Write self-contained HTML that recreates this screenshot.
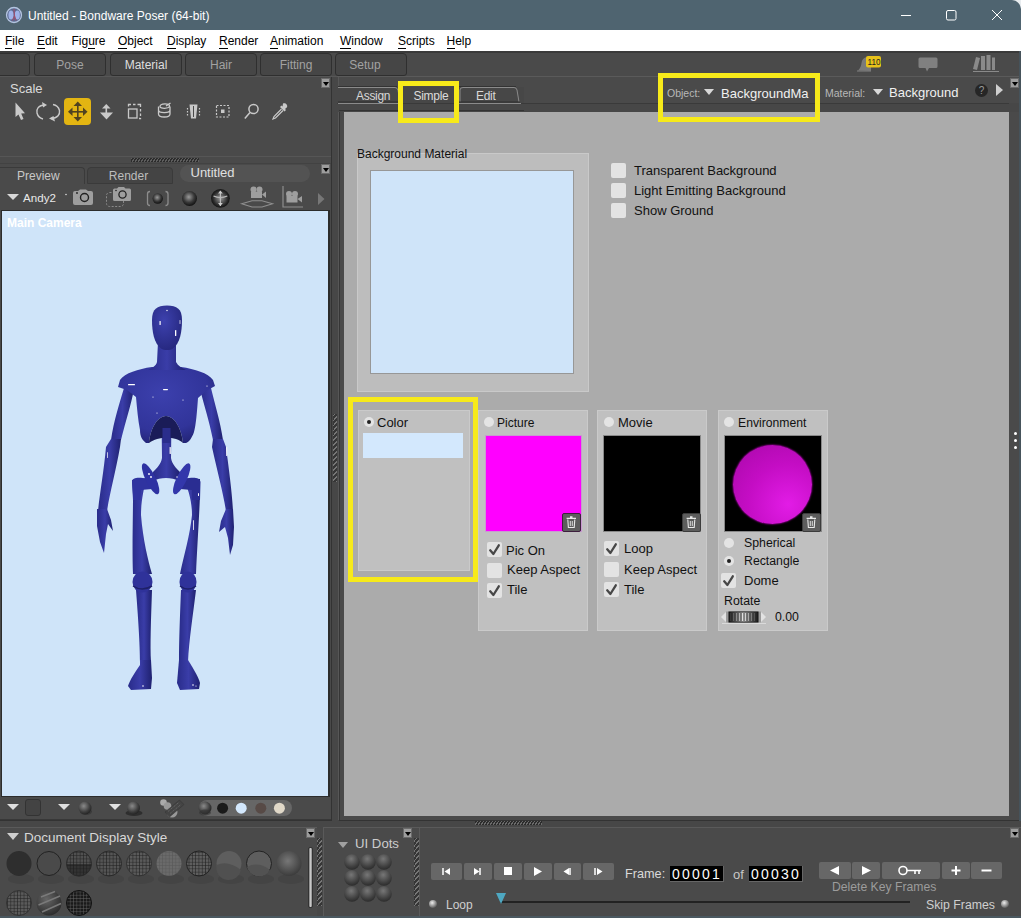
<!DOCTYPE html>
<html><head><meta charset="utf-8">
<style>
*{box-sizing:border-box;margin:0;padding:0}
html,body{width:1021px;height:918px;overflow:hidden;background:#4a4a4a;font-family:"Liberation Sans",sans-serif;position:relative}
.a{position:absolute}
#title{left:0;top:0;width:1021px;height:30px;background:#4f6470;color:#fff;font-size:12px}
#menu{left:0;top:30px;width:1021px;height:21px;background:#fff;color:#000;font-size:12px}
#menu span{position:absolute;top:3.5px}
#menu u{text-decoration:none;border-bottom:1px solid #000}
.rt{position:absolute;top:53px;height:23px;width:72px;border:1px solid #2f2f2f;border-radius:4px 4px 3px 3px;background:#464646;color:#a2a2a2;font-size:12px;text-align:center;line-height:23px}
.dd{position:absolute;width:9px;height:10px;background:#9d9d9d;border:1px solid #6a6a6a}
.dd:after{content:"";position:absolute;left:1px;top:3px;border-left:3px solid transparent;border-right:3px solid transparent;border-top:4px solid #000}
.lbl{position:absolute;color:#111;font-size:13px;white-space:nowrap}
.cb{position:absolute;width:15px;height:15px;background:#e3e3e3;border-radius:2px}
.yel{position:absolute;border:5px solid #f7ea1a}
.sp{position:absolute;background:#c0c0c0;border:1px solid #cacaca}
.rd{position:absolute;width:10px;height:10px;border-radius:50%;background:#e4e4e4}
.rd.on:after{content:"";position:absolute;left:3px;top:3px;width:4px;height:4px;border-radius:50%;background:#222}
.cb svg{position:absolute;left:0;top:0}
.trash{position:absolute;width:19px;height:19px;background:#5d5d5d;border:1px solid #3c3c3c;border-radius:2px}
.trash svg{position:absolute;left:-1px;top:-1px}
.hatch{position:absolute;background:repeating-linear-gradient(-50deg,#767676 0 1.2px,#363636 1.2px 3.2px)}
.btn{position:absolute;height:17px;background:#676767;border-radius:2px}
.btn svg{position:absolute;left:0;top:0}
.fb{position:absolute;width:54px;height:16px;background:#000;color:#fff;font-size:14px;font-family:"Liberation Sans",sans-serif;letter-spacing:2.2px;padding-left:2px;line-height:16px;border-right:1px solid #666;border-bottom:1px solid #666}
.dot{position:absolute;width:8px;height:8px;border-radius:50%;background:radial-gradient(circle at 40% 35%,#eee,#777 60%,#222);}
</style></head><body>
<div id="title" class="a">
  <svg class="a" style="left:2px;top:4px" width="24" height="22" viewBox="2 4 24 22">
   <circle cx="14" cy="15" r="7.5" fill="#5a6a90" stroke="#b4c4e0" stroke-width="1.3"/>
   <ellipse cx="11" cy="15" rx="2.6" ry="4.5" fill="#9fb2e8"/>
   <ellipse cx="17.3" cy="15" rx="2.6" ry="4.5" fill="#9fb2e8"/>
   <path d="M14 9 L14.5 16 L12.5 20.5 M14.5 16 L16 20.5" stroke="#9a5070" stroke-width="1.2" fill="none"/>
  </svg>
  <div class="a" style="left:28px;top:9px">Untitled - Bondware Poser (64-bit)</div>
  <svg class="a" style="left:880px;top:0" width="141" height="30" viewBox="880 0 141 30">
   <path d="M901 15.5 H911" stroke="#fff" stroke-width="1"/>
   <rect x="946.5" y="10.5" width="9.5" height="9.5" rx="1.5" fill="none" stroke="#fff" stroke-width="1"/>
   <path d="M992 10 L1002 20 M1002 10 L992 20" stroke="#fff" stroke-width="1"/>
   <path d="M1012 0 H1021 V9 Q1020 1 1012 0 Z" fill="#e8ecef"/>
  </svg>
</div>
<div id="menu" class="a">
  <span style="left:5px"><u>F</u>ile</span>
  <span style="left:37px"><u>E</u>dit</span>
  <span style="left:71.5px">Fig<u>u</u>re</span>
  <span style="left:118px"><u>O</u>bject</span>
  <span style="left:167px"><u>D</u>isplay</span>
  <span style="left:219px"><u>R</u>ender</span>
  <span style="left:270px"><u>A</u>nimation</span>
  <span style="left:340px"><u>W</u>indow</span>
  <span style="left:398px"><u>S</u>cripts</span>
  <span style="left:446.5px"><u>H</u>elp</span>
</div>

<!-- room tabs -->
<div class="a" style="left:0;top:51px;width:1021px;height:26px;background:#4a4a4a;border-top:2px solid #3a3a3a"></div><div class="a" style="left:0;top:76px;width:1021px;height:1px;background:#565656"></div>
<div class="rt" style="left:-42px"></div>
<div class="rt" style="left:34px">Pose</div>
<div class="rt" style="left:110px;color:#dedede">Material</div>
<div class="rt" style="left:185px">Hair</div>
<div class="rt" style="left:260px">Fitting</div>
<div class="rt" style="left:335px;text-indent:-12px">Setup</div>

<!-- left tool panel -->
<div class="a" style="left:0;top:77px;width:331px;height:84px;background:#4a4a4a"></div>
<div class="a" style="left:10px;top:81px;color:#dadada;font-size:13px">Scale</div>
<div class="dd" style="left:321px;top:78px"></div>
<svg class="a" style="left:0;top:95px" width="331" height="35" viewBox="0 95 331 35">
 <g fill="#c9c9c9" stroke="none">
  <path d="M15.5 102.5 L15.5 117 L18.5 114.5 L21 120 L23.5 119 L21.2 113.6 L25 113.3 Z"/>
 </g>
 <g fill="none" stroke="#c9c9c9" stroke-width="1.4">
  <path d="M45 105 C38 105 36 110 37 113 C38 117 41 118.5 43 119"/>
  <path d="M51 118.5 C58 118.5 60 114 59.5 110.5 C58.5 106.5 55.5 105 53 104.5"/>
 </g>
 <g fill="#c9c9c9"><path d="M42 102 L47 105 L43 107.5 Z"/><path d="M55 121.5 L49 118.5 L53.5 116 Z"/></g>
 <rect x="64" y="98" width="27" height="27" rx="4" fill="#e3b512"/>
 <g fill="#4f4220">
  <rect x="77" y="104" width="1.6" height="16"/><rect x="70" y="111" width="16" height="1.6"/>
  <path d="M77.8 101.5 L73.5 106 L82 106 Z"/><path d="M77.8 121.5 L73.5 117 L82 117 Z"/>
  <path d="M68 111.8 L72.5 107.5 L72.5 116 Z"/><path d="M87.5 111.8 L83 107.5 L83 116 Z"/>
 </g>
 <g fill="#c9c9c9">
  <path d="M106.3 104 L102 108.5 L110.5 108.5 Z"/><rect x="105.5" y="107" width="1.6" height="6"/>
  <path d="M100 112.5 L113 112.5 L106.5 119.5 Z"/>
 </g>
 <g fill="none" stroke="#c9c9c9" stroke-width="1.3">
  <rect x="128.5" y="109" width="8.5" height="9"/>
  <path d="M128.5 106.5 V104.5 H131 M133 104.5 H135.5 M137.5 104.5 H140.5 V107 M140.5 109 V111.5 M140.5 113.5 V116 M140.5 118 V118.5 H139" stroke-width="1.3"/>
 </g>
 <g fill="none" stroke="#c9c9c9" stroke-width="1.3">
  <path d="M160 106.5 C160 103 170 103 169.5 106 C169 109 160 109 160 106.5 Z M158.5 110 C158.5 113.5 170 113.5 170 110 M158.5 114 C158.5 118 170 118 170 114 M158.5 106.5 V114 M170 106.5 V114"/>
  <path d="M166 106 L170.5 103" />
 </g>
 <g fill="#c9c9c9">
  <path d="M189.5 104.5 H197.5 L196 118.5 H191 Z"/>
 </g>
 <g fill="#4a4a4a"><rect x="193" y="106" width="1" height="11"/></g>
 <g fill="none" stroke="#c9c9c9" stroke-width="1.2" stroke-dasharray="1.5 1.5">
  <path d="M187.5 108 V117 M199.5 108 V117"/>
  <rect x="216.5" y="105.5" width="12.5" height="11.5" stroke-dasharray="2 1.5"/>
 </g>
 <rect x="221" y="109.5" width="3.5" height="3.5" fill="#c9c9c9"/>
 <g fill="none" stroke="#c9c9c9" stroke-width="1.5">
  <circle cx="253.5" cy="109" r="4.6"/>
  <path d="M250 112.5 L244.8 118.5"/>
 </g>
 <g fill="#c9c9c9">
  <path d="M283 103.5 C285.5 102.5 288 105 287 107.3 L285 109 L286 110 L284.5 111.5 L280 107 L281.5 105.5 L282.5 106.5 Z"/>
 </g>
 <g fill="none" stroke="#c9c9c9" stroke-width="1.2"><path d="M281.5 109 L274 116.5 L273 119 L275.5 118 L283 110.5"/></g>
</svg>


<!-- separator strip -->
<div class="a" style="left:331px;top:77px;width:1px;height:744px;background:#333"></div><div class="a" style="left:332px;top:77px;width:6px;height:744px;background:#474747"></div><div class="hatch" style="left:333px;top:414px;width:4px;height:68px"></div>

<!-- preview tabs -->
<div class="a" style="left:0;top:161px;width:331px;height:50px;background:#4a4a4a"></div>
<div class="a" style="left:0;top:156px;width:331px;height:1px;background:#565656"></div><div class="a" style="left:0;top:163px;width:331px;height:1px;background:#424242"></div><div class="a" style="left:131px;top:158px;width:68px;height:4px;background:repeating-linear-gradient(-60deg,#5e5e5e 0 1.2px,#2c2c2c 1.2px 2.6px)"></div>
<div class="a" style="left:0;top:167px;width:85px;height:17px;background:#4a4a4a;border:1px solid #3a3a3a;border-left:none;border-bottom:none;border-radius:0 4px 0 0;color:#c8c8c8;font-size:12px;padding-left:17px;line-height:17px">Preview</div>
<div class="a" style="left:87px;top:167px;width:86px;height:17px;background:#444;border:1px solid #3a3a3a;border-radius:4px 4px 0 0;color:#bdbdbd;font-size:12px;text-align:center;line-height:17px;text-indent:-3px">Render</div>
<div class="a" style="left:180px;top:165px;width:130px;height:17px;background:#535353;border-radius:9px;color:#e0e0e0;font-size:13px;padding-left:10.5px;line-height:16px">Untitled</div>
<div class="dd" style="left:321px;top:164px"></div>


<!-- camera row -->
<div class="a" style="left:7px;top:193.5px;border-left:6px solid transparent;border-right:6px solid transparent;border-top:6.5px solid #d8d8d8"></div>
<div class="a" style="left:23px;top:191px;color:#e8e8e8;font-size:11.6px">Andy2</div>
<svg class="a" style="left:0;top:183px" width="331" height="27" viewBox="0 183 331 27">
 <defs>
  <radialGradient id="sg1" cx="0.45" cy="0.4" r="0.6"><stop offset="0" stop-color="#9a9a9a"/><stop offset="0.6" stop-color="#3a3a3a"/><stop offset="1" stop-color="#111"/></radialGradient>
  <radialGradient id="sg2" cx="0.5" cy="0.5" r="0.55"><stop offset="0" stop-color="#9a9a9a"/><stop offset="0.7" stop-color="#2a2a2a"/><stop offset="1" stop-color="#0a0a0a"/></radialGradient>
 </defs>
 <circle cx="66" cy="194.5" r="0.8" fill="#ddd"/>
 <path d="M73 193 Q73 191 75 191 L78 191 L80 189.5 L86 189.5 L88 191 L91 191 Q93 191 93 193 L93 203 Q93 205 91 205 L75 205 Q73 205 73 203 Z" fill="#9e9e9e"/>
 <circle cx="84.5" cy="197.5" r="4" fill="none" stroke="#222" stroke-width="1.4"/>
 <circle cx="77" cy="193" r="0.9" fill="#222"/>
 <rect x="106.5" y="192.5" width="17" height="14" rx="3" fill="none" stroke="#8a8a8a" stroke-width="1" stroke-dasharray="2 1.5"/>
 <path d="M113 190 Q113 188.5 114.5 188.5 L117 188.5 L118.5 187 L124 187 L125.5 188.5 L129.5 188.5 Q131 188.5 131 190 L131 199.5 Q131 201 129.5 201 L114.5 201 Q113 201 113 199.5 Z" fill="#9e9e9e"/>
 <circle cx="122.5" cy="194.5" r="3.6" fill="none" stroke="#222" stroke-width="1.3"/>
 <circle cx="116" cy="190.5" r="0.8" fill="#222"/>
 <path d="M150 191.5 Q147.5 191.5 147.5 194 L147.5 203 Q147.5 205.5 150 205.5 M165.5 191.5 Q168 191.5 168 194 L168 203 Q168 205.5 165.5 205.5" fill="none" stroke="#8c8c8c" stroke-width="1.3"/>
 <circle cx="157.7" cy="198.5" r="5.2" fill="url(#sg1)"/>
 <circle cx="189.5" cy="198.5" r="7.5" fill="url(#sg1)"/>
 <circle cx="220.4" cy="198.3" r="9.4" fill="url(#sg2)"/>
 <path d="M220.4 191 L220.4 206 M213.5 196 Q220.4 199 227.3 196" fill="none" stroke="#bbb" stroke-width="1.2"/>
 <path d="M218 203 L220.4 206 L222.8 203 Z M218 193.5 L220.4 190.5 L222.8 193.5Z" fill="#ccc"/>
 <circle cx="253.5" cy="189.5" r="3" fill="#9e9e9e"/><circle cx="259.5" cy="189.5" r="3" fill="#9e9e9e"/>
 <rect x="251" y="191.5" width="11" height="6.5" fill="#9e9e9e"/><path d="M262 194.5 L266 191.5 L266 198 Z" fill="#9e9e9e"/>
 <path d="M241.8 203.8 L252 200.8 L262 200.8 L272.5 203.8 L262 207 L252 207 Z" fill="none" stroke="#8e8e8e" stroke-width="1.1"/>
 <path d="M283 186 L283 207 L303 207" fill="none" stroke="#8e8e8e" stroke-width="1.2"/>
 <circle cx="289" cy="194" r="3" fill="#9e9e9e"/><circle cx="295" cy="194" r="3" fill="#9e9e9e"/>
 <rect x="286.5" y="196" width="11" height="6.5" fill="#9e9e9e"/><path d="M297.5 199 L302 196 L302 202.5 Z" fill="#9e9e9e"/>
 <path d="M318 193 L324.5 199 L318 205 Z" fill="#777"/>
</svg>

<!-- preview viewport -->
<div class="a" style="left:1px;top:210px;width:329px;height:587px;background:#2c2c2c"></div>
<div class="a" style="left:2px;top:211px;width:326px;height:585px;background:#cfe4f9"></div>
<div class="a" style="left:7px;top:216px;color:#fff;font-size:12px;font-weight:bold">Main Camera</div>
<svg class="a" style="left:2px;top:211px" width="326" height="585" viewBox="2 211 326 585">
 <defs>
  <linearGradient id="lg" x1="0" y1="0" x2="1" y2="0"><stop offset="0" stop-color="#292c8a"/><stop offset="0.5" stop-color="#3a3da8"/><stop offset="1" stop-color="#1f2170"/></linearGradient>
  <radialGradient id="tg" cx="0.45" cy="0.35" r="0.7"><stop offset="0" stop-color="#3c40ad"/><stop offset="0.7" stop-color="#31349a"/><stop offset="1" stop-color="#222475"/></radialGradient>
  <radialGradient id="hg" cx="0.4" cy="0.35" r="0.7"><stop offset="0" stop-color="#3d41ae"/><stop offset="1" stop-color="#25277e"/></radialGradient>
 </defs>
 <g fill="url(#lg)">
  <!-- upper arms -->
  <path d="M124 388 L134 389 C131 405 126 420 121 440 L111 440 C114 420 119 405 124 388 Z"/>
  <path d="M200 389 L211 388 C215 405 220 420 223 440 L213 440 C209 420 204 405 200 389 Z"/>
  <!-- forearms -->
  <path d="M111 439 L121 439 L120 447 C116 470 110 492 107 511 L98 511 C100 492 104 470 106 447 Z"/>
  <path d="M213 439 L223 439 L226 447 C229 470 232 492 233 511 L226 511 C223 492 217 470 212 447 Z"/>
  <!-- hands -->
  <path d="M97 509 L107 509 L111 520 L113 531 L108 524 L106 534 L104 553 L100 542 L97 526 Z"/>
  <path d="M226 509 L233 509 L234 527 L233 545 L230 555 L228 538 L225 527 L219 532 L221 521 Z"/>
  <!-- thighs -->
  <path d="M132 480 L146 478 C144 490 141 500 141 515 C143 540 148 560 152 574 L133 574 C132 550 133 520 133 495 Z"/>
  <path d="M184 478 L200 479 L200 495 C199 520 197 550 196 574 L180 574 C184 555 190 535 192 515 C192 500 188 490 184 478 Z"/>
  <!-- shins -->
  <path d="M136 590 L152 590 C151 620 150 645 151 662 L140 662 C140 645 138 615 136 590 Z"/>
  <path d="M181 590 L196 590 C193 615 189 640 188 662 L179 662 C179 640 180 615 181 590 Z"/>
  <!-- feet -->
  <path d="M140 660 L151 660 L152 678 L151 689 L131 690 L128 686 C130 680 135 672 140 665 Z"/>
  <path d="M179 660 L188 660 C193 668 198 676 200 683 L199 689 L180 690 L177 683 Z"/>
 </g>
 <g fill="#2f329a">
  <ellipse cx="142.5" cy="582" rx="10" ry="10.5"/>
  <ellipse cx="188" cy="582" rx="8.5" ry="10.5"/>
 </g>
 <path d="M133 586 Q142 592 152 586 M180 586 Q188 592 196 586" stroke="#1e2068" stroke-width="1.5" fill="none"/>
 <!-- spine + pelvis -->
 <path d="M161.5 418 L171.5 418 L171 458 C172 464 176 468 180 472 L179 481 C172 477 160 477 153 481 L153 472 C157 468 161 464 162 458 Z" fill="url(#lg)"/>
 <path d="M132 482 C132 477 140 477 147 479 L154 481 L152 489 L141 490 L140 500 L133 500 Z" fill="#2f33a0"/>
 <path d="M200.5 482 C200 477 192 477 185 479 L178 481 L180 489 L192 490 L192 500 L200 500 Z" fill="#2a2d92"/>
 <ellipse cx="150.6" cy="478.8" rx="5" ry="17" transform="rotate(-26 150.6 478.8)" fill="#2e32a2"/>
 <ellipse cx="181.7" cy="478.8" rx="5" ry="17" transform="rotate(26 181.7 478.8)" fill="#3337ab"/>
 <!-- torso -->
 <path d="M152 367 L181 367 C195 369 208 373 213 380 L215 386 L206 391 L198 398 C197 412 196 425 194 432 C192 438 189 442 186 443 L183 443 C182 430 175 416 166 416 C157 416 150 430 149 443 L146 443 C142 440 140 436 140 430 C138 420 137 408 136 397 L127 390 L118 387 L120 380 C125 373 138 369 152 367 Z" fill="url(#tg)"/>
 <path d="M149 443 C150 430 157 416 166 416 C175 416 182 430 183 443 C176 436 158 436 149 443 Z" fill="#1a1c58"/>
 <path d="M162.5 428 L170.5 428 L170.5 443 L162.5 443 Z" fill="#2a2d8c"/>
 <!-- neck -->
 <path d="M158 342 L176 342 L176 362 C178 366 182 368 186 370 L148 370 C152 368 156 366 157 362 Z" fill="url(#lg)"/>
 <!-- head -->
 <path d="M167 305.5 C177 305.5 182 309 182 320 C182 332 180 343 173 348.5 C170 350.5 164 350.5 161 348.5 C154 343 152 332 152 320 C152 309 157 305.5 167 305.5 Z" fill="url(#hg)"/>
 <g fill="#fff">
  <circle cx="167" cy="310.5" r="0.7"/><rect x="159.5" y="321" width="1.2" height="4" rx="0.6"/><rect x="175" y="330" width="1.3" height="6" rx="0.6"/><rect x="179.5" y="320" width="1" height="4" rx="0.5" opacity="0.7"/>
  <rect x="128" y="384" width="7" height="1.3" rx="0.6"/><rect x="163" y="389" width="5" height="1.2" rx="0.6"/>
  <circle cx="153" cy="397" r="0.6"/><circle cx="157" cy="413" r="0.6"/>
  <circle cx="183" cy="400" r="0.6"/><circle cx="207" cy="386" r="0.6"/>
  <rect x="169.6" y="447" width="1.2" height="7" rx="0.6"/>
  <circle cx="149" cy="474" r="0.9"/><circle cx="151" cy="477" r="0.9"/><circle cx="177" cy="477" r="0.7"/>
  <rect x="198" y="493" width="1" height="3" rx="0.5"/><rect x="193" y="520" width="1" height="10" rx="0.5" opacity="0.8"/>
  <rect x="226" y="447" width="1.2" height="9" rx="0.6" opacity="0.8"/>
  <rect x="107" y="452" width="1" height="6" rx="0.5" opacity="0.7"/>
  <circle cx="143" cy="686" r="0.8"/><circle cx="193" cy="685" r="0.8"/><circle cx="196" cy="686" r="0.6"/>
 </g>
</svg>



<!-- preview bottom toolbar -->
<svg class="a" style="left:0;top:797px" width="331" height="25" viewBox="0 797 331 25">
 <defs>
  <radialGradient id="bs" cx="0.4" cy="0.35" r="0.65"><stop offset="0" stop-color="#8a8a8a"/><stop offset="0.7" stop-color="#3e3e3e"/><stop offset="1" stop-color="#252525"/></radialGradient>
 </defs>
 <path d="M7 804 L19 804 L13 810 Z" fill="#e0e0e0"/>
 <rect x="25.5" y="799.5" width="15" height="16" rx="2.5" fill="#434343" stroke="#333" stroke-width="1"/>
 <path d="M58 804 L70 804 L64 810 Z" fill="#e0e0e0"/>
 <ellipse cx="86" cy="811.5" rx="6" ry="3.5" fill="#3a3a3a"/>
 <circle cx="85" cy="808" r="6.5" fill="url(#bs)"/>
 <path d="M109 804 L121 804 L115 810 Z" fill="#e0e0e0"/>
 <ellipse cx="134" cy="813" rx="8.5" ry="3" fill="#2e2e2e"/>
 <circle cx="133.5" cy="808" r="6.5" fill="url(#bs)"/>
 <circle cx="163.5" cy="802.5" r="3.3" fill="#aaa"/><circle cx="167.5" cy="806" r="3.8" fill="#999"/>
 <circle cx="172" cy="812" r="5.5" fill="#999"/>
 <path d="M165 812 L179.5 800 L184 804.5 L169.5 817 Z" fill="#444" stroke="#333" stroke-width="0.5"/>
 <path d="M168 811.5 L179 802.3 M170 813.5 L181 804.5" stroke="#888" stroke-width="0.6" stroke-dasharray="1 1"/>
 <rect x="199" y="800" width="93" height="16" rx="8" fill="#666"/>
 <circle cx="205" cy="808" r="6.5" fill="url(#bs)"/>
 <ellipse cx="205" cy="812.5" rx="6" ry="3" fill="#333" opacity="0.6"/>
 <circle cx="222.6" cy="808.2" r="5.5" fill="#1a1a1a"/>
 <circle cx="241.2" cy="808.2" r="5.5" fill="#d3e8fd"/>
 <circle cx="260.8" cy="808.2" r="5.5" fill="#574a46"/>
 <circle cx="279.4" cy="808.2" r="5.5" fill="#e0d8c8"/>
</svg>
<div class="a" style="left:0;top:819px;width:331px;height:1px;background:#383838"></div>

<!-- main material panel -->
<div class="a" style="left:338px;top:77px;width:683px;height:744px;background:#4a4a4a;border-left:1px solid #575757;border-bottom:1px solid #333"></div><div class="a" style="left:339px;top:104px;width:1px;height:716px;background:#363636"></div>
<div class="dd" style="left:1010px;top:78px"></div>

<!-- material room header -->
<div class="a" style="left:337px;top:76px;width:684px;height:1px;background:#5a5a5a"></div>
<div class="a" style="left:337px;top:103px;width:684px;height:9px;background:#474747"></div>
<div class="a" style="left:337px;top:103px;width:672px;height:1px;background:#3a3a3a"></div>
<svg class="a" style="left:337px;top:84px" width="190" height="28" viewBox="337 84 190 28">
 <rect x="338" y="87" width="186" height="16" fill="#474747"/>
 <path d="M338 86.5 H397 M458 86.5 H516" stroke="#333" stroke-width="1"/>
 <path d="M338 87.5 H395 Q397 87.5 398 90 L400 102 M460 102 V90 Q460 87.5 463 87.5 H514 Q516.5 87.5 517 90 L519 102" fill="none" stroke="#8a8a8a" stroke-width="1"/>
 <path d="M338 102 H400 M458 102 H520" stroke="#2e2e2e" stroke-width="1"/>
 <path d="M338 103.5 H398 M458 103.5 H521" stroke="#8a8a8a" stroke-width="1"/>
 <path d="M339 110.5 H524" stroke="#333" stroke-width="1"/>
</svg>
<div class="a" style="left:356px;top:88.5px;color:#d8d8d8;font-size:12px;letter-spacing:-0.3px">Assign</div>
<div class="a" style="left:413.5px;top:88.5px;color:#dcdcdc;font-size:12px;letter-spacing:-0.3px">Simple</div>
<div class="a" style="left:476px;top:88.5px;color:#d8d8d8;font-size:12px;letter-spacing:-0.3px">Edit</div>

<div class="a" style="left:667px;top:87px;color:#b8b8b8;font-size:10.5px">Object:</div>
<div class="a" style="left:704px;top:89px;border-left:5px solid transparent;border-right:5px solid transparent;border-top:6px solid #d8d8d8"></div>
<div class="a" style="left:721px;top:85.5px;color:#f0f0f0;font-size:13px">BackgroundMa</div>
<div class="a" style="left:825px;top:87px;color:#b8b8b8;font-size:10.5px">Material:</div>
<div class="a" style="left:873px;top:89px;border-left:5.5px solid transparent;border-right:5.5px solid transparent;border-top:6px solid #d8d8d8"></div>
<div class="a" style="left:889px;top:85px;color:#f0f0f0;font-size:13px">Background</div>
<div class="a" style="left:975px;top:84px;width:13px;height:13px;border-radius:50%;background:#262626;color:#9a9a9a;font-size:10px;text-align:center;line-height:13px">?</div>
<div class="a" style="left:996px;top:83.5px;border-top:6.5px solid transparent;border-bottom:6.5px solid transparent;border-left:7px solid #cfcfcf"></div>

<svg class="a" style="left:850px;top:52px" width="160" height="24" viewBox="850 52 160 24">
 <path d="M858 70.5 Q861 68 861.5 63 Q862 58 867 57 L871 58 L871 71 Z" fill="#7a7a7a"/>
 <path d="M857 71 L871 71" stroke="#7a7a7a" stroke-width="1.2"/>
 <rect x="866" y="56" width="15" height="11.5" rx="2" fill="#e8c21a"/>
 <text x="867.5" y="65.3" font-family="Liberation Sans" font-size="9" fill="#222" textLength="13" lengthAdjust="spacingAndGlyphs">110</text>
 <path d="M920 57.5 L936 57.5 Q937.5 57.5 937.5 59 L937.5 66.5 Q937.5 68 936 68 L929 68 L927 71.5 L925.5 68 L920 68 Q918.5 68 918.5 66.5 L918.5 59 Q918.5 57.5 920 57.5 Z" fill="#808080"/>
 <path d="M976 57 L980 58 L977 70 L973 69 Z" fill="#8a8a8a"/>
 <rect x="981" y="56" width="4" height="14" fill="#8a8a8a"/>
 <rect x="986.5" y="55" width="4" height="15" fill="#8a8a8a"/>
 <rect x="992" y="57.5" width="3" height="12.5" fill="#8a8a8a"/>
 <path d="M973 71.5 L999 71.5" stroke="#8a8a8a" stroke-width="1"/>
</svg>
<div class="a" style="left:1014px;top:432px;width:3px;height:3px;border-radius:50%;background:#fff"></div>
<div class="a" style="left:1014px;top:439px;width:3px;height:3px;border-radius:50%;background:#fff"></div>
<div class="a" style="left:1014px;top:446px;width:3px;height:3px;border-radius:50%;background:#fff"></div>
<div class="a" style="left:1019px;top:51px;width:2px;height:867px;background:#46535b"></div>
<div class="a" style="left:344px;top:112px;width:665px;height:704px;background:#ababab"></div>

<div class="a" style="left:357px;top:153px;width:232px;height:239px;background:#bdbdbd;border:1px solid #c9c9c9"></div>
<div class="a" style="left:370px;top:170px;width:204px;height:204px;background:#cfe4f9;border:1px solid #979797"></div>
<div class="lbl" style="left:357px;top:147px;font-size:12px">Background Material</div>


<div class="cb" style="left:611px;top:163px"></div>
<div class="cb" style="left:611px;top:183px"></div>
<div class="cb" style="left:611px;top:203px"></div>
<div class="lbl" style="left:634px;top:163px">Transparent Background</div>
<div class="lbl" style="left:634px;top:183px">Light Emitting Background</div>
<div class="lbl" style="left:634px;top:203px">Show Ground</div>


<!-- subpanels -->
<div class="sp" style="left:358px;top:410px;width:112px;height:161px"></div>
<div class="sp" style="left:478px;top:410px;width:110px;height:221px"></div>
<div class="sp" style="left:597px;top:410px;width:110px;height:221px"></div>
<div class="sp" style="left:718px;top:410px;width:110px;height:221px"></div>

<div class="rd on" style="left:364px;top:417px"></div>
<div class="lbl" style="left:377px;top:415px">Color</div>
<div class="a" style="left:363px;top:433px;width:100px;height:25px;background:#d3e8fd"></div>

<div class="rd" style="left:484px;top:417px"></div>
<div class="lbl" style="left:497px;top:416px;font-size:12px">Picture</div>
<div class="a" style="left:485px;top:435px;width:97px;height:97px;background:#ff00ff;border:1px solid #c89ad0"></div>
<div class="trash" style="left:562px;top:513px;border-color:#3d1f3d"><svg width="19" height="19" viewBox="0 0 19 19"><path d="M4.6 5.3 H14 M8 4 H10.5" stroke="#e8e8e8" stroke-width="1.3" fill="none"/><path d="M5.8 6.5 L6.4 14.5 H12.2 L12.8 6.5" stroke="#e8e8e8" stroke-width="1.1" fill="none"/><path d="M8.3 8 V13 M10.3 8 V13" stroke="#e8e8e8" stroke-width="0.9"/></svg></div>
<div class="cb ck" style="left:487px;top:542px"><svg width="15" height="15"><path d="M3.2 8.3 L6.4 12 L11.8 3.3" fill="none" stroke="#474747" stroke-width="2.3" stroke-linejoin="round" stroke-linecap="round"/></svg></div>
<div class="cb" style="left:487px;top:563px"></div>
<div class="cb ck" style="left:487px;top:583px"><svg width="15" height="15"><path d="M3.2 8.3 L6.4 12 L11.8 3.3" fill="none" stroke="#474747" stroke-width="2.3" stroke-linejoin="round" stroke-linecap="round"/></svg></div>
<div class="lbl" style="left:506px;top:543px">Pic On</div>
<div class="lbl" style="left:507px;top:562px">Keep Aspect</div>
<div class="lbl" style="left:507px;top:582px">Tile</div>

<div class="rd" style="left:604px;top:417px"></div>
<div class="lbl" style="left:618px;top:415px">Movie</div>
<div class="a" style="left:603px;top:435px;width:98px;height:97px;background:#000;border:1px solid #888"></div>
<div class="trash" style="left:682px;top:513px"><svg width="19" height="19" viewBox="0 0 19 19"><path d="M4.6 5.3 H14 M8 4 H10.5" stroke="#e8e8e8" stroke-width="1.3" fill="none"/><path d="M5.8 6.5 L6.4 14.5 H12.2 L12.8 6.5" stroke="#e8e8e8" stroke-width="1.1" fill="none"/><path d="M8.3 8 V13 M10.3 8 V13" stroke="#e8e8e8" stroke-width="0.9"/></svg></div>
<div class="cb ck" style="left:604px;top:541px"><svg width="15" height="15"><path d="M3.2 8.3 L6.4 12 L11.8 3.3" fill="none" stroke="#474747" stroke-width="2.3" stroke-linejoin="round" stroke-linecap="round"/></svg></div>
<div class="cb" style="left:604px;top:562px"></div>
<div class="cb ck" style="left:604px;top:582px"><svg width="15" height="15"><path d="M3.2 8.3 L6.4 12 L11.8 3.3" fill="none" stroke="#474747" stroke-width="2.3" stroke-linejoin="round" stroke-linecap="round"/></svg></div>
<div class="lbl" style="left:624px;top:541px">Loop</div>
<div class="lbl" style="left:624px;top:562px">Keep Aspect</div>
<div class="lbl" style="left:624px;top:582px">Tile</div>

<div class="rd" style="left:724px;top:417px"></div>
<div class="lbl" style="left:738px;top:415.5px;font-size:12.2px">Environment</div>
<div class="a" style="left:724px;top:435px;width:98px;height:97px;background:#000;border:1px solid #888;overflow:hidden">
  <div class="a" style="left:8px;top:9px;width:79px;height:79px;border-radius:50%;background:radial-gradient(circle at 70% 75%,#e21ce6 0%,#c40dc4 50%,#a808a8 100%);box-shadow:0 0 2px #f0f"></div>
</div>
<div class="trash" style="left:802px;top:513px"><svg width="19" height="19" viewBox="0 0 19 19"><path d="M4.6 5.3 H14 M8 4 H10.5" stroke="#e8e8e8" stroke-width="1.3" fill="none"/><path d="M5.8 6.5 L6.4 14.5 H12.2 L12.8 6.5" stroke="#e8e8e8" stroke-width="1.1" fill="none"/><path d="M8.3 8 V13 M10.3 8 V13" stroke="#e8e8e8" stroke-width="0.9"/></svg></div>
<div class="rd" style="left:724px;top:538px"></div>
<div class="rd on" style="left:724px;top:556px"></div>
<div class="cb ck" style="left:721px;top:573px"><svg width="15" height="15"><path d="M3.2 8.3 L6.4 12 L11.8 3.3" fill="none" stroke="#474747" stroke-width="2.3" stroke-linejoin="round" stroke-linecap="round"/></svg></div>
<div class="lbl" style="left:744px;top:536px;font-size:12.3px">Spherical</div>
<div class="lbl" style="left:744px;top:554px;font-size:12.3px">Rectangle</div>
<div class="lbl" style="left:744px;top:573px">Dome</div>
<div class="lbl" style="left:724px;top:594px;font-size:12.3px">Rotate</div>
<svg class="a" style="left:718px;top:609px" width="52" height="16" viewBox="718 609 52 16">
 <defs><linearGradient id="dg" x1="0" x2="1"><stop offset="0" stop-color="#222"/><stop offset="0.5" stop-color="#eee"/><stop offset="1" stop-color="#222"/></linearGradient></defs>
 <path d="M721 617 L726 612 L726 622 Z" fill="#e2e2e2"/>
 <path d="M766 617 L761 612 L761 622 Z" fill="#e2e2e2"/>
 <rect x="726" y="611.5" width="35" height="11" fill="#9a9a9a"/>
 <rect x="729" y="612" width="29" height="10" fill="url(#dg)" stroke="#111" stroke-width="1"/>
 <path d="M732 613 V621 M735 613 V621 M738 613 V621 M741 613 V621 M744 613 V621 M747 613 V621 M750 613 V621 M753 613 V621 M756 613 V621" stroke="#111" stroke-width="0.9"/>
 <path d="M722 623.5 H766" stroke="#dadada" stroke-width="1.2"/>
</svg>
<div class="lbl" style="left:775px;top:610px;font-size:12.3px">0.00</div>

<!-- yellow boxes -->
<div class="yel" style="left:398px;top:81px;width:61px;height:42px"></div>
<div class="yel" style="left:658px;top:73px;width:162px;height:49px"></div>
<div class="yel" style="left:347.5px;top:397px;width:130.5px;height:185px;border-width:5.5px"></div>

<!-- bottom panels -->
<div class="a" style="left:0;top:821px;width:1021px;height:97px;background:#474747"></div>
<div class="a" style="left:0;top:820px;width:331px;height:1px;background:#333"></div>
<div class="a" style="left:0;top:827px;width:317px;height:91px;background:#4a4a4a;border-top:1px solid #5a5a5a"></div>
<div class="a" style="left:323px;top:827px;width:96px;height:91px;background:#4a4a4a;border-top:1px solid #5a5a5a;border-left:1px solid #5a5a5a"></div>
<div class="a" style="left:419px;top:827px;width:602px;height:91px;background:#4a4a4a;border-top:1px solid #5a5a5a;border-left:1px solid #5a5a5a"></div>
<div class="a" style="left:0;top:916px;width:1021px;height:2px;background:#4a5860"></div>
<div class="hatch" style="left:317px;top:838px;width:5px;height:68px"></div>
<div class="hatch" style="left:414px;top:838px;width:5px;height:68px"></div>
<div class="a" style="left:475px;top:821px;width:67px;height:4px;background:repeating-linear-gradient(-60deg,#6a6a6a 0 1.2px,#2c2c2c 1.2px 2.6px)"></div>
<div class="dd" style="left:306px;top:828px"></div>
<div class="dd" style="left:403px;top:828px"></div>
<div class="dd" style="left:1010px;top:828px"></div>

<div class="a" style="left:7px;top:833px;border-left:6px solid transparent;border-right:6px solid transparent;border-top:7px solid #cfcfcf"></div>
<div class="a" style="left:24px;top:830px;color:#d8d8d8;font-size:13.5px">Document Display Style</div>
<div class="a" style="left:308px;top:847px;width:5px;height:61px;background:linear-gradient(90deg,#777,#c8c8c8 50%,#888);border-radius:2px;border:1px solid #333"></div>
<svg class="a" style="left:0;top:846px" width="310" height="72" viewBox="0 846 310 72">
 <defs>
  <radialGradient id="d1" cx="0.45" cy="0.4" r="0.6"><stop offset="0" stop-color="#777"/><stop offset="1" stop-color="#3c3c3c"/></radialGradient>
  <radialGradient id="d2" cx="0.5" cy="0.35" r="0.65"><stop offset="0" stop-color="#6a6a6a"/><stop offset="1" stop-color="#454545"/></radialGradient>
  <pattern id="meshl" width="3.3" height="3.3" patternUnits="userSpaceOnUse" x="0.5" y="0.5"><path d="M0 0 H3.3 M0 0 V3.3" fill="none" stroke="#6a6a6a" stroke-width="0.8"/></pattern>
  <radialGradient id="d3" cx="0.4" cy="0.35" r="0.7"><stop offset="0" stop-color="#666"/><stop offset="1" stop-color="#2a2a2a"/></radialGradient>
  <pattern id="mesh" width="3.3" height="3.3" patternUnits="userSpaceOnUse" x="0.5" y="0.5"><path d="M0 0 H3.3 M0 0 V3.3" fill="none" stroke="#1c1c1c" stroke-width="1"/></pattern>
 </defs>
 <g fill="#444">
  <ellipse cx="21" cy="879" rx="13" ry="5"/><ellipse cx="51" cy="879" rx="13" ry="5"/><ellipse cx="81" cy="879" rx="13" ry="5"/><ellipse cx="111" cy="879" rx="13" ry="5"/><ellipse cx="141" cy="879" rx="13" ry="5"/><ellipse cx="171" cy="879" rx="13" ry="5"/><ellipse cx="201" cy="879" rx="13" ry="5"/><ellipse cx="231" cy="879" rx="13" ry="5"/><ellipse cx="261" cy="879" rx="13" ry="5"/><ellipse cx="291" cy="879" rx="13" ry="5"/>
 </g>
 <circle cx="19" cy="863.5" r="12.5" fill="#2e2e2e"/>
 <circle cx="49" cy="863.5" r="12" fill="#4a4a4a" stroke="#222" stroke-width="1"/>
 <circle cx="79" cy="863.5" r="12.5" fill="#505050"/><path d="M66.5 864 A12.5 12.5 0 0 0 91.5 864 Z" fill="#333"/><circle cx="79" cy="863.5" r="12.5" fill="url(#mesh)" stroke="#2a2a2a"/>
 <circle cx="109" cy="863.5" r="12.5" fill="#555"/><circle cx="109" cy="863.5" r="12.5" fill="url(#mesh)" stroke="#2a2a2a"/>
 <circle cx="139" cy="863.5" r="12.5" fill="#5a5a5a"/><circle cx="139" cy="863.5" r="12.5" fill="url(#mesh)" stroke="#333"/>
 <circle cx="169" cy="863.5" r="12.5" fill="#6a6a6a"/><circle cx="169" cy="863.5" r="12.5" fill="url(#mesh)" opacity="0.25"/>
 <circle cx="199" cy="863.5" r="12.5" fill="#5e5e5e"/><circle cx="199" cy="863.5" r="12.5" fill="url(#mesh)" stroke="#222"/>
 <circle cx="229" cy="863.5" r="12.5" fill="#5e5e5e"/><path d="M216.5 865 Q228 860 241 870 A12.5 12.5 0 0 1 216.5 865Z" fill="#505050"/>
 <circle cx="259" cy="863.5" r="12.5" fill="#5e5e5e" stroke="#222" stroke-width="1"/><path d="M247 867 Q258 861 270 870 A12.5 12.5 0 0 1 247 867Z" fill="#525252"/>
 <circle cx="289" cy="863.5" r="12.5" fill="url(#d1)"/>
 <circle cx="19" cy="903" r="12.5" fill="#5a5a5a"/><circle cx="19" cy="903" r="12.5" fill="url(#mesh)" stroke="#333"/>
 <circle cx="49" cy="903" r="12.5" fill="url(#d3)"/>
 <path d="M41 897 L55 891.5 M38.5 905 L60 896 M42 912 L61 903.5" stroke="#7a7a7a" stroke-width="1.6"/>
 <circle cx="79" cy="903" r="12.5" fill="#1a1a1a"/><circle cx="79" cy="903" r="12.5" fill="url(#meshl)" stroke="#111"/>
</svg>

<div class="a" style="left:338px;top:842px;border-left:5.5px solid transparent;border-right:5.5px solid transparent;border-top:6px solid #a0a0a0"></div>
<div class="a" style="left:355px;top:836px;color:#cdcdcd;font-size:13.2px">UI Dots</div>
<svg class="a" style="left:340px;top:852px" width="55" height="52" viewBox="340 852 55 52">
 <defs><radialGradient id="ud" cx="0.45" cy="0.3" r="0.7"><stop offset="0" stop-color="#777"/><stop offset="0.75" stop-color="#3d3d3d"/><stop offset="1" stop-color="#2c2c2c"/></radialGradient></defs>
 <g fill="url(#ud)">
  <circle cx="352" cy="862" r="7.8"/><circle cx="368" cy="862" r="7.8"/><circle cx="384" cy="862" r="7.8"/>
  <circle cx="352" cy="878" r="7.8"/><circle cx="368" cy="878" r="7.8"/><circle cx="384" cy="878" r="7.8"/>
  <circle cx="352" cy="894" r="7.8"/><circle cx="368" cy="894" r="7.8"/><circle cx="384" cy="894" r="7.8"/>
 </g>
</svg>

<!-- timeline -->
<div class="btn" style="left:431px;top:863px;width:31px"><svg width="31" height="17"><path d="M12 5 L12 12" stroke="#fff" stroke-width="1.5"/><path d="M19 5 L13.5 8.5 L19 12Z" fill="#fff"/></svg></div>
<div class="btn" style="left:464px;top:863px;width:28px"><svg width="28" height="17"><path d="M16 5 L16 12" stroke="#fff" stroke-width="1.5"/><path d="M10 5 L15.5 8.5 L10 12Z" fill="#fff"/></svg></div>
<div class="btn" style="left:494px;top:863px;width:28px"><svg width="28" height="17"><rect x="10" y="4" width="8" height="8" fill="#fff"/></svg></div>
<div class="btn" style="left:524px;top:863px;width:28px"><svg width="28" height="17"><path d="M10 4 L18 8.5 L10 13Z" fill="#fff"/></svg></div>
<div class="btn" style="left:554px;top:863px;width:27px"><svg width="27" height="17"><path d="M16 5 L16 12" stroke="#fff" stroke-width="1.5"/><path d="M15 5 L9.5 8.5 L15 12Z" fill="#fff"/></svg></div>
<div class="btn" style="left:583px;top:863px;width:31px"><svg width="31" height="17"><path d="M12 5 L12 12" stroke="#fff" stroke-width="1.5"/><path d="M14 5 L19.5 8.5 L14 12Z" fill="#fff"/></svg></div>
<div class="a" style="left:625px;top:866.5px;color:#dadada;font-size:12.7px">Frame:</div>
<div class="fb" style="left:670px;top:866px">00001</div>
<div class="a" style="left:733px;top:867px;color:#c8c8c8;font-size:13px">of</div>
<div class="fb" style="left:749px;top:866px">00030</div>
<div class="btn" style="left:819px;top:862px;width:32px"><svg width="32" height="17"><path d="M20 4 L11 8.5 L20 13Z" fill="#fff"/></svg></div>
<div class="btn" style="left:852px;top:862px;width:28px"><svg width="28" height="17"><path d="M10 4 L19 8.5 L10 13Z" fill="#fff"/></svg></div>
<div class="btn" style="left:882px;top:862px;width:58px"><svg width="58" height="17"><circle cx="21" cy="8.5" r="4" fill="none" stroke="#fff" stroke-width="1.6"/><path d="M25 8.5 L39 8.5 M33 8.5 V12 M37 8.5 V12" stroke="#fff" stroke-width="1.6"/></svg></div>
<div class="btn" style="left:942px;top:862px;width:28px"><svg width="28" height="17"><path d="M14 4 V13 M9.5 8.5 H18.5" stroke="#fff" stroke-width="2"/></svg></div>
<div class="btn" style="left:971px;top:862px;width:31px"><svg width="31" height="17"><path d="M10.5 8.5 H20.5" stroke="#fff" stroke-width="2"/></svg></div>
<div class="a" style="left:832px;top:880px;color:#9c9c9c;font-size:12.2px">Delete Key Frames</div>
<div class="a" style="left:926px;top:897.5px;color:#cfcfcf;font-size:12.3px">Skip Frames</div>
<div class="a" style="left:446px;top:898px;color:#cfcfcf;font-size:12px">Loop</div>
<div class="dot" style="left:429px;top:900px"></div>
<div class="dot" style="left:1001px;top:900px"></div>
<div class="a" style="left:500px;top:901px;width:410px;height:2px;background:#222"></div>
<div class="a" style="left:496px;top:893px;border-left:5.5px solid transparent;border-right:5.5px solid transparent;border-top:11px solid #4ea8c2"></div>
</body></html>
